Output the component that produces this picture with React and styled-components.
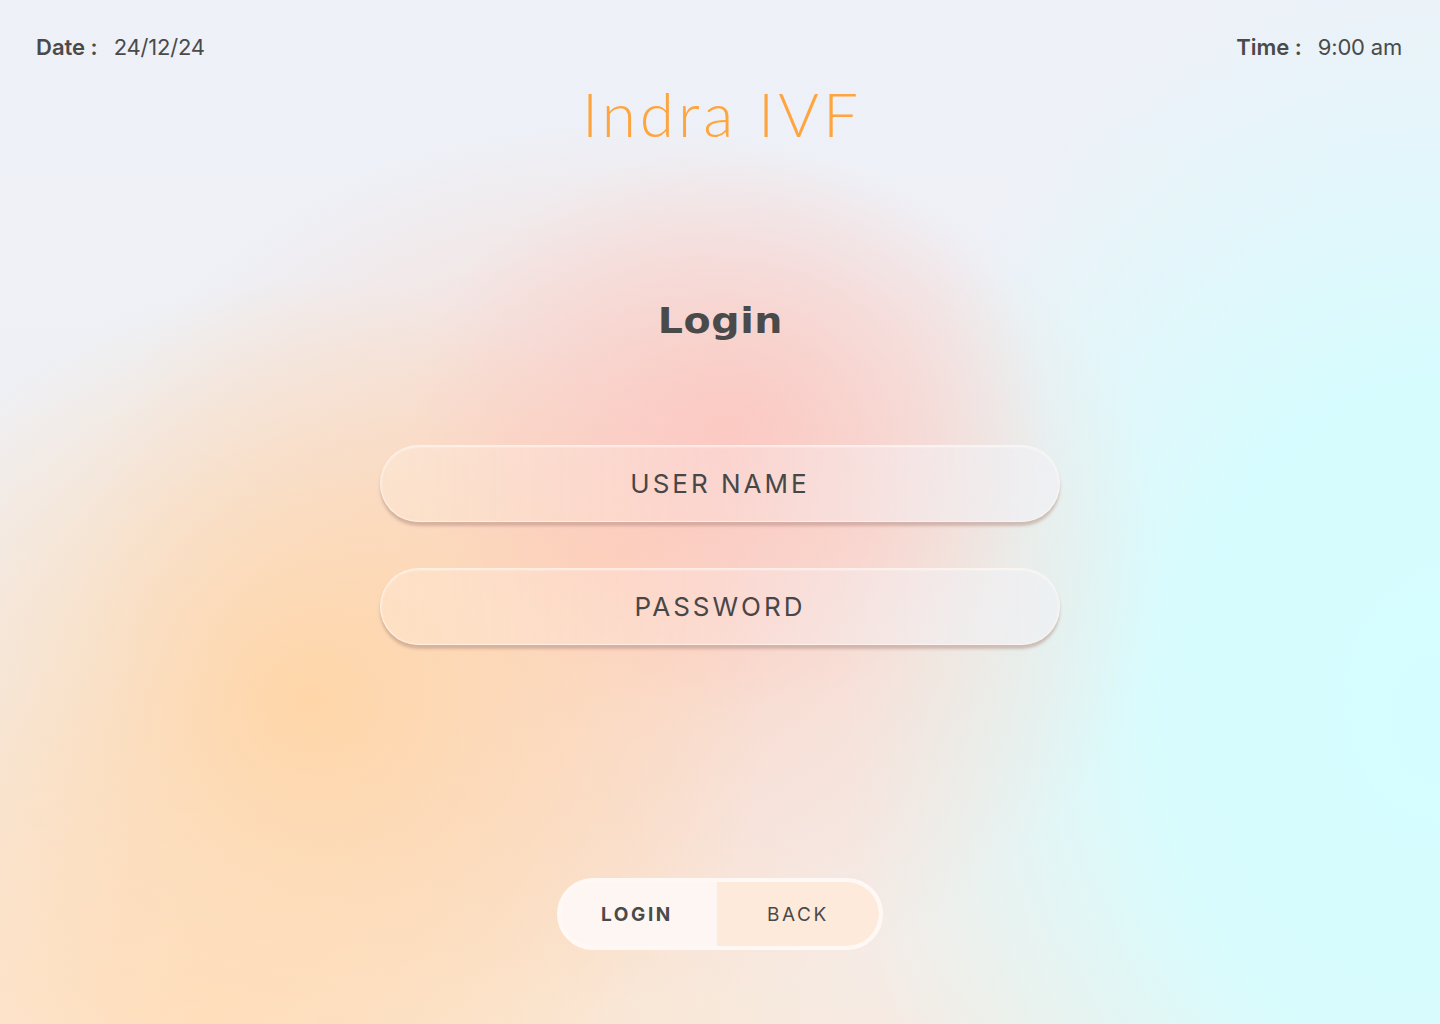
import React from "react";
import styled, { createGlobalStyle } from "styled-components";

const Global = createGlobalStyle`
  html, body { margin: 0; padding: 0; }
  body { font-family: Inter, "Noto Sans", sans-serif; color: #484848; }
  * { box-sizing: border-box; }
`;

const Page = styled.div`
  width: 100%;
  min-height: 100vh;
  display: flex;
  flex-direction: column;
  align-items: center;
  overflow: hidden;
  background:
    radial-gradient(ellipse 320px 280px at 730px 430px, rgba(252, 196, 190, 0.8), rgba(252, 196, 190, 0) 100%),
    radial-gradient(ellipse 460px 420px at 310px 700px, rgba(255, 214, 168, 1), rgba(255, 214, 168, 0) 100%),
    radial-gradient(ellipse 540px 440px at 620px 560px, rgba(253, 208, 190, 0.9), rgba(253, 208, 190, 0) 100%),
    radial-gradient(ellipse 700px 360px at 200px 1024px, rgba(255, 224, 192, 1), rgba(255, 224, 192, 0) 100%),
    radial-gradient(ellipse 600px 760px at 1440px 720px, rgba(213, 253, 255, 1), rgba(213, 253, 255, 0.92) 45%, rgba(213, 253, 255, 0) 100%),
    linear-gradient(180deg, #edf1f8 0%, #eff0f5 40%, #f6ebe4 100%);
`;

const Header = styled.header`
  width: 100%;
  display: flex;
  justify-content: space-between;
  padding: 32px 38px 0 36px;
  font-size: 22px;
  line-height: 30px;
  color: #4a4a4a;
`;

const Stamp = styled.div`
  display: flex;
  gap: 16px;
`;

const StampLabel = styled.span`
  font-weight: 600;
`;

const StampValue = styled.span`
  font-weight: 400;
  letter-spacing: -0.2px;
`;

const Brand = styled.h1`
  margin: 15px 0 0 4px;
  font-family: "Lato", "Noto Sans", sans-serif;
  font-weight: 300;
  font-size: 62px;
  line-height: 72px;
  color: #ffa53f;
  letter-spacing: 4px;
`;

const Heading = styled.h2`
  margin: 152px 0 0 0;
  font-family: "DejaVu Sans", sans-serif;
  font-weight: 700;
  font-size: 35px;
  line-height: 40px;
  color: #4a4a4a;
  letter-spacing: 0.5px;
  transform: scaleX(1.13);
`;

const Form = styled.div`
  margin-top: 104px;
  display: flex;
  flex-direction: column;
  gap: 46px;
`;

const Field = styled.div`
  width: 680px;
  height: 77px;
  border-radius: 39px;
  display: flex;
  align-items: center;
  justify-content: center;
  background: linear-gradient(90deg, rgba(255, 240, 225, 0.35), rgba(255, 240, 240, 0.25) 50%, rgba(240, 240, 244, 0.7));
  border: 1.5px solid rgba(255, 245, 240, 0.7);
  box-shadow: 0 4px 3px rgba(170, 130, 120, 0.45), inset 0 1px 2px rgba(255, 255, 255, 0.6);
  font-size: 26px;
  letter-spacing: 3px;
  font-weight: 400;
  color: #474747;
`;

const Actions = styled.div`
  margin-top: 233px;
  display: flex;
  width: 326px;
  height: 72px;
  border-radius: 36px;
  border: 4px solid #fff8f4;
  background: #fff8f4;
  overflow: hidden;
`;

const ActionButton = styled.button`
  flex: ${(p) => (p.$primary ? "0 0 156px" : "1 1 auto")};
  border: none;
  margin: 0;
  padding: 0;
  font-family: Inter, "Noto Sans", sans-serif;
  font-size: 19px;
  letter-spacing: 2.6px;
  font-weight: ${(p) => (p.$primary ? 700 : 400)};
  color: #4a4a4a;
  background: ${(p) => (p.$primary ? "#fdf6f2" : "#fdeadb")};
  border-radius: ${(p) => (p.$primary ? "32px 0 0 32px" : "0 32px 32px 0")};
  padding-right: ${(p) => (p.$primary ? "4px" : "0")};
  cursor: pointer;
`;

export default function App() {
  return (
    <>
      <Global />
      <Page>
        <Header>
          <Stamp>
            <StampLabel>Date :</StampLabel>
            <StampValue>24/12/24</StampValue>
          </Stamp>
          <Stamp>
            <StampLabel>Time :</StampLabel>
            <StampValue>9:00 am</StampValue>
          </Stamp>
        </Header>
        <Brand>Indra IVF</Brand>
        <Heading>Login</Heading>
        <Form>
          <Field>USER NAME</Field>
          <Field>PASSWORD</Field>
        </Form>
        <Actions>
          <ActionButton $primary>LOGIN</ActionButton>
          <ActionButton>BACK</ActionButton>
        </Actions>
      </Page>
    </>
  );
}
